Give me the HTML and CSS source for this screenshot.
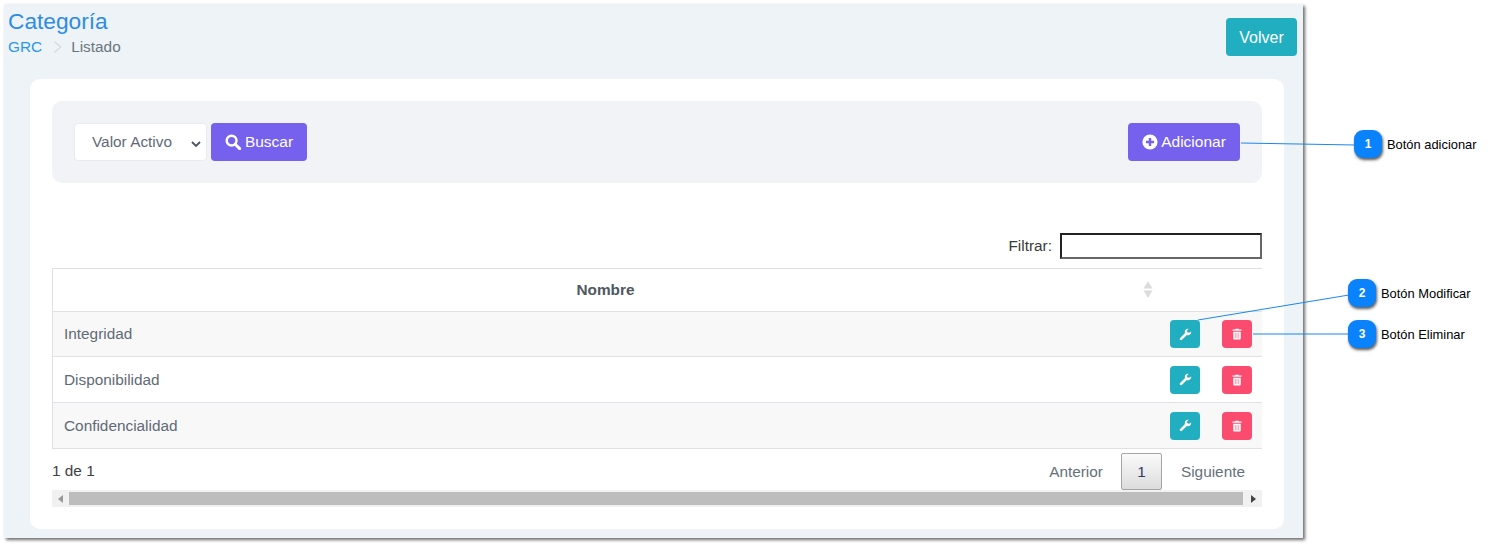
FILE: index.html
```html
<!DOCTYPE html>
<html lang="es">
<head>
<meta charset="utf-8">
<title>Categoría</title>
<link rel="stylesheet" href="styles.css">
</head>
<body>
<main class="panel">
  <header class="top">
    <div>
      <h1 class="title">Categoría</h1>
      <nav class="crumbs"><a>GRC</a><svg class="crumb-sep" viewBox="0 0 10 12"><path d="M1.5 .8L7.8 6 1.5 11.2" fill="none" stroke="#d5d8dd" stroke-width="1.2"/></svg><span>Listado</span></nav>
    </div>
    <button class="btn btn-teal volver">Volver</button>
  </header>
  <section class="card">
    <div class="toolbar">
      <div class="search">
        <div class="select">Valor Activo<svg class="chev" viewBox="0 0 10 6"><path d="M1 1l4 4 4-4" fill="none" stroke="#4a5560" stroke-width="1.8"/></svg></div>
        <button class="btn btn-purple buscar"><svg class="ico" viewBox="0 0 16 16"><circle cx="6.6" cy="6.6" r="4.9" fill="none" stroke="#fff" stroke-width="2.4"/><path d="M10.2 10.2l4.4 4.4" stroke="#fff" stroke-width="2.9" stroke-linecap="round"/></svg>Buscar</button>
      </div>
      <button class="btn btn-purple adicionar"><svg class="ico" viewBox="0 0 16 16"><circle cx="8" cy="8" r="7.6" fill="#fff"/><path d="M8 4v8M4 8h8" stroke="#7661ef" stroke-width="2.4"/></svg>Adicionar</button>
    </div>
    <div class="filter"><label>Filtrar:</label><div class="filter-input"></div></div>
    <div class="table">
      <div class="row head"><div class="name">Nombre</div><svg class="sort" viewBox="0 0 10 17"><path d="M5 0l4.5 7.5h-9z" fill="#dcdcdc"/><path d="M5 17l4.5-7.5h-9z" fill="#dcdcdc"/></svg></div>
      <div class="row odd r1"><div class="cell">Integridad</div><div class="actions">
        <span class="act teal"><svg viewBox="0 0 16 16"><path class="wrench" d="M15 4.2a4 4 0 0 1-5.3 4.4l-6 6a1.6 1.6 0 0 1-2.3-2.3l6-6A4 4 0 0 1 12 1l-2.3 2.3.5 2 2 .5z"/></svg></span>
        <span class="act red"><svg viewBox="0 0 14 16"><path class="trash" d="M5 1h4l.6 1H13v1.6H1V2h3.4zM2 5h10v9a1.4 1.4 0 0 1-1.4 1.4H3.4A1.4 1.4 0 0 1 2 14z"/><path class="trash-in" d="M4.8 6.5v7M7 6.5v7M9.2 6.5v7"/></svg></span>
      </div></div>
      <div class="row r2"><div class="cell">Disponibilidad</div><div class="actions">
        <span class="act teal"><svg viewBox="0 0 16 16"><path class="wrench" d="M15 4.2a4 4 0 0 1-5.3 4.4l-6 6a1.6 1.6 0 0 1-2.3-2.3l6-6A4 4 0 0 1 12 1l-2.3 2.3.5 2 2 .5z"/></svg></span>
        <span class="act red"><svg viewBox="0 0 14 16"><path class="trash" d="M5 1h4l.6 1H13v1.6H1V2h3.4zM2 5h10v9a1.4 1.4 0 0 1-1.4 1.4H3.4A1.4 1.4 0 0 1 2 14z"/><path class="trash-in" d="M4.8 6.5v7M7 6.5v7M9.2 6.5v7"/></svg></span>
      </div></div>
      <div class="row odd r3"><div class="cell">Confidencialidad</div><div class="actions">
        <span class="act teal"><svg viewBox="0 0 16 16"><path class="wrench" d="M15 4.2a4 4 0 0 1-5.3 4.4l-6 6a1.6 1.6 0 0 1-2.3-2.3l6-6A4 4 0 0 1 12 1l-2.3 2.3.5 2 2 .5z"/></svg></span>
        <span class="act red"><svg viewBox="0 0 14 16"><path class="trash" d="M5 1h4l.6 1H13v1.6H1V2h3.4zM2 5h10v9a1.4 1.4 0 0 1-1.4 1.4H3.4A1.4 1.4 0 0 1 2 14z"/><path class="trash-in" d="M4.8 6.5v7M7 6.5v7M9.2 6.5v7"/></svg></span>
      </div></div>
    </div>
    <div class="foot">
      <div class="info">1 de 1</div>
      <div class="pager"><span>Anterior</span><span class="page">1</span><span>Siguiente</span></div>
    </div>
    <div class="scroll">
      <span class="arrow"><svg viewBox="0 0 6 8"><path d="M5 0v8L0 4z" fill="#999"/></svg></span>
      <span class="thumb"></span>
      <span class="arrow arrow-end"><svg viewBox="0 0 6 8"><path d="M1 0v8l5-4z" fill="#444"/></svg></span>
    </div>
  </section>
</main>
<svg class="lines" viewBox="0 0 1493 547">
  <path d="M1241 143L1355 145M1198 320L1349 295M1253 334L1349 334" fill="none" stroke="#1a86f2" stroke-width="1"/>
</svg>
<div class="callout c1"><span class="dot">1</span><span class="lab">Botón adicionar</span></div>
<div class="callout c2"><span class="dot">2</span><span class="lab">Botón Modificar</span></div>
<div class="callout c3"><span class="dot">3</span><span class="lab">Botón Eliminar</span></div>
</body>
</html>
```
FILE: styles.css
```css
* { box-sizing: border-box; }
html, body { margin: 0; height: 547px; overflow: hidden; background: #fff; }
body { padding: 4px 0 0 4px; font-family: "Liberation Sans", Arial, sans-serif; font-size: 15.36px; color: #5f6a75; position: relative; }

.panel { width: 1299px; height: 534px; background: #edf3f7; box-shadow: 2px 2px 3px #6d6d6d; }
.top { height: 75px; display: flex; justify-content: space-between; padding: 4px 6px 0 4px; }
.title { margin: 0; font-size: 22.7px; font-weight: 400; line-height: 27px; color: #2e8ce6; }
.crumbs { display: flex; align-items: center; margin-top: 2px; line-height: 20px; }
.crumbs a { color: #2a97ee; }
.crumbs span { color: #6c757d; }
.crumb-sep { width: 10px; height: 12px; margin: 0 8px 0 11px; }

.btn { border: 0; border-radius: 4px; color: #fff; font-family: inherit; font-size: 16px; height: 38px; display: flex; align-items: center; justify-content: center; padding: 0; }
.btn-teal { background: #20aec0; }
.btn-purple { background: #7661ef; font-size: 15.5px; }
.volver { width: 71px; margin-top: 10px; padding-top: 2px; }
.ico { width: 16px; height: 16px; margin-right: 4px; }
.adicionar .ico { margin-right: 3px; }
.buscar { width: 96px; }
.adicionar { width: 112px; }

.card { margin-left: 26px; width: 1254px; height: 450px; background: #fff; border-radius: 10px; padding: 22px; }
.toolbar { height: 82px; background: #f1f3f7; border-radius: 10px; padding: 22px; display: flex; justify-content: space-between; }
.search { display: flex; gap: 4px; }
.select { width: 133px; height: 38px; background: #fff; border: 1px solid #e8ebf0; border-radius: 4px; display: flex; align-items: center; padding-left: 17px; position: relative; }
.chev { width: 10px; height: 6px; position: absolute; right: 5px; top: 17px; }

.filter { display: flex; justify-content: flex-end; align-items: center; gap: 8px; margin-top: 50px; height: 26px; color: #3b3b3b; }
.filter-input { width: 202px; height: 26px; background: #fff; border: 2px solid; border-color: #222 #666 #666 #222; }

.table { margin-top: 9px; border-top: 1px solid #dee2e6; }
.row { display: flex; align-items: center; border-bottom: 1px solid #dee2e6; border-left: 1px solid #dee2e6; padding-left: 11px; position: relative; }
.head { height: 43px; }
.head .name { width: 1083px; text-align: center; font-weight: 700; color: #4e5860; }
.sort { width: 10px; height: 17px; position: absolute; left: 1090px; top: 12px; }
.r1 { height: 45px; }
.r2 { height: 46px; }
.r3 { height: 46px; }
.odd { background: #f8f8f8; }
.cell { flex: 1; }
.actions { display: flex; gap: 22px; padding-right: 10px; }
.act { width: 30px; height: 28px; border-radius: 4px; display: flex; align-items: center; justify-content: center; }
.act svg { height: 12px; width: 12px; }
.teal svg { height: 13px; width: 13px; }
.teal { background: #20aec0; }
.red { background: #fb4b6e; }
.wrench { fill: #fff; }
.trash { fill: #fff; }
.trash-in { stroke: #f7909f; stroke-width: 1.1; fill: none; }

.foot { display: flex; justify-content: space-between; height: 42px; padding-top: 4px; }
.info { color: #3d4046; margin-top: 9px; }
.pager { display: flex; align-items: center; height: 37px; padding-right: 17px; color: #65707a; }
.page { width: 41px; height: 37px; margin: 0 19px 0 18px; border: 1px solid #a5a5a5; border-radius: 2px; background: linear-gradient(#fafafa, #dcdcdc); color: #333a6a; display: flex; align-items: center; justify-content: center; }

.scroll { height: 17px; background: #f1f1f1; display: flex; align-items: center; margin-top: -1px; }
.arrow { width: 17px; display: flex; align-items: center; justify-content: center; }
.arrow-end { width: 19px; }
.arrow svg { width: 6px; height: 8px; }
.thumb { flex: 1; height: 13px; background: #bdbdbd; }

.lines { position: absolute; left: 0; top: 0; width: 1493px; height: 547px; pointer-events: none; }
.callout { position: absolute; display: flex; align-items: center; gap: 5px; color: #000; font-size: 12.9px; }
.dot { width: 28px; height: 28px; border-radius: 9px; background: #0a82fb; box-shadow: 1px 2px 3px #5a5a5a; color: #fff; font-size: 12px; font-weight: 700; display: flex; align-items: center; justify-content: center; }
.c1 { left: 1354px; top: 130px; }
.c2 { left: 1348px; top: 279px; }
.c3 { left: 1348px; top: 320px; }
.c1 .lab, .c2 .lab { padding-top: 1px; }
```
